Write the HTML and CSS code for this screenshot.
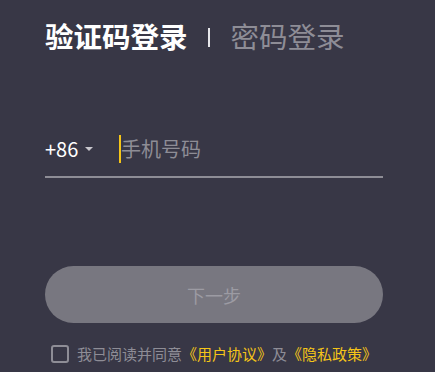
FILE: index.html
```html
<!DOCTYPE html>
<html lang="zh-CN">
  <head>
    <meta charset="UTF-8" />
    <meta name="viewport" content="width=device-width, initial-scale=1.0" />
    <title>登录</title>
    <link rel="stylesheet" href="styles.css">
  </head>
  <body>
    <div class="login">
      <div class="tabs">
        <span class="tab active">验证码登录</span>
        <span class="divider"></span>
        <span class="tab">密码登录</span>
      </div>

      <div class="phone-row">
        <div class="area-code">
          <span>+86</span>
          <span class="arrow"></span>
        </div>
        <div class="phone-input">
          <span class="cursor"></span>
          <span class="placeholder">手机号码</span>
        </div>
      </div>

      <button class="next">下一步</button>

      <div class="agree">
        <span class="checkbox"></span>
        <span class="agree-text">我已阅读并同意<a class="link">《用户协议》</a>及<a class="link">《隐私政策》</a></span>
      </div>
    </div>
  </body>
</html>
```

FILE: styles.css
```css
body {
  margin: 0;
  background-color: #383746;
  font-family: "Noto Sans CJK SC", "Noto Sans", sans-serif;
  height: 100vh;
}

.login {
  width: 338px;
  padding: 16px 0 0 45px;
}

.tabs {
  display: flex;
  align-items: center;
  height: 40px;
}

.tab {
  font-size: 28.5px;
  line-height: 40px;
  color: #8e8d96;
}

.tab.active {
  color: #ffffff;
  font-weight: bold;
}

.divider {
  width: 2px;
  height: 19px;
  background-color: #e6e6ea;
  margin: 2px 21px 0 20px;
}

.phone-row {
  display: flex;
  align-items: center;
  margin-top: 69px;
  height: 47px;
  border-bottom: 2px solid #8e8d96;
  padding-bottom: 4px;
}

.area-code {
  display: flex;
  align-items: center;
  width: 74px;
  color: #ffffff;
  font-size: 20px;
}

.arrow {
  width: 0;
  height: 0;
  margin-left: 7px;
  border-left: 4px solid transparent;
  border-right: 4px solid transparent;
  border-top: 4px solid #c9c8ce;
}

.phone-input {
  display: flex;
  align-items: center;
}

.cursor {
  width: 2px;
  height: 28px;
  background-color: #f5c518;
}

.placeholder {
  font-size: 20px;
  color: #8e8d96;
}

.next {
  display: block;
  width: 338px;
  height: 57px;
  margin-top: 88px;
  border: none;
  border-radius: 29px;
  background-color: #787780;
  color: #9c9ba3;
  font-family: inherit;
  font-size: 18px;
}

.agree {
  display: flex;
  align-items: center;
  margin-top: 20px;
  padding-left: 6px;
}

.checkbox {
  width: 14px;
  height: 14px;
  border: 2px solid #8e8d96;
  border-radius: 3px;
  margin-right: 8px;
}

.agree-text {
  font-size: 15px;
  color: #8e8d96;
}

.link {
  color: #f5c518;
}
```
